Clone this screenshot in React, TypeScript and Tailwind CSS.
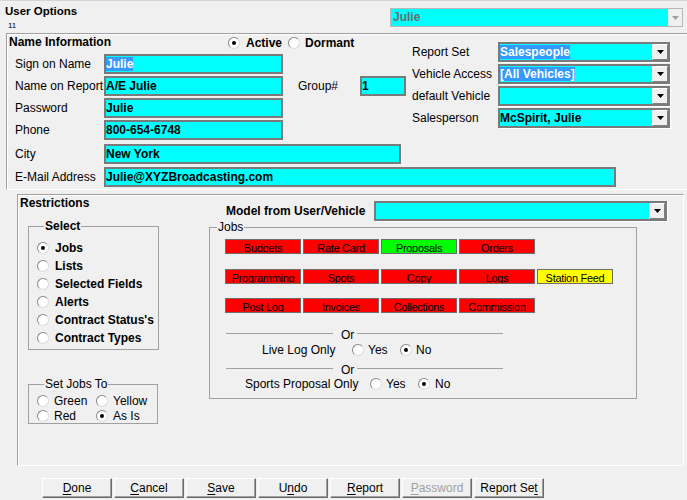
import React from "react";

function Radio({ on }: { on?: boolean }) {
  return (
    <span className="flex h-[12px] w-[12px] shrink-0 items-center justify-center rounded-full border border-t-[#8a8a8a] border-l-[#8a8a8a] border-r-[#dcdcdc] border-b-[#dcdcdc] bg-white">
      {on && <span className="h-[4px] w-[4px] rounded-full bg-black" />}
    </span>
  );
}

function Arrow({ gray }: { gray?: boolean }) {
  return (
    <svg width="7" height="4" viewBox="0 0 7 4">
      <polygon points="0,0 7,0 3.5,4" fill={gray ? "#a0a0a0" : "#000"} />
    </svg>
  );
}

function Combo({ w, text, sel }: { w: string; text?: string; sel?: boolean }) {
  return (
    <div className={`flex h-[20px] border-2 border-[#7a7a7a] bg-[#00ffff] shadow-[1px_1px_0_#fff] ${w}`}>
      <div className="flex-1 overflow-hidden whitespace-nowrap pt-[1px] text-[12px] font-bold leading-[14px]">
        {sel ? <span className="bg-[#3399ff] text-white">{text}</span> : text}
      </div>
      <div className="flex w-[16px] items-center justify-center border border-t-white border-l-white border-b-[#808080] border-r-[#808080] bg-[#f0f0f0]">
        <Arrow />
      </div>
    </div>
  );
}

function TextBox({ w, text, sel }: { w: string; text?: string; sel?: boolean }) {
  return (
    <div className={`h-[20px] overflow-hidden whitespace-nowrap border-2 border-[#7a7a7a] bg-[#00ffff] pt-[1px] text-[12px] font-bold leading-[14px] ${w}`}>
      {sel ? <span className="bg-[#3399ff] text-white">{text}</span> : text}
    </div>
  );
}

function JobBtn({ label, color }: { label: string; color: string }) {
  return (
    <div className={`h-[15px] w-[76px] overflow-hidden border border-[#6c6c6c] pt-[2px] text-center text-[11px] leading-[13px] tracking-[-0.3px] ${color}`}>
      {label}
    </div>
  );
}

function Btn({ pre, u, post, disabled }: { pre?: string; u: string; post?: string; disabled?: boolean }) {
  return (
    <div
      className={`flex h-[20px] w-[70px] items-center justify-center border border-t-white border-l-white border-b-[#696969] border-r-[#696969] bg-[#f0f0f0] shadow-[inset_-1px_-1px_0_#a0a0a0] text-[12px] ${
        disabled ? "text-[#a0a0a0]" : "text-black"
      }`}
    >
      {pre}
      <span className="underline underline-offset-2">{u}</span>
      {post}
    </div>
  );
}

function Or() {
  return (
    <div className="ml-[16px] flex h-[14px] items-center">
      <div className="h-px w-[107px] bg-[#a0a0a0]" />
      <span className="ml-[8px] pt-[3px] leading-[14px]">Or</span>
      <div className="ml-[3px] h-px w-[146px] bg-[#a0a0a0]" />
    </div>
  );
}

const leftRows = [
  { label: "Sign on Name", text: "Julie", sel: true },
  { label: "Name on Report", text: "A/E Julie", group: true },
  { label: "Password", text: "Julie" },
  { label: "Phone", text: "800-654-6748" },
];

const rightRows = [
  { label: "Report Set", text: "Salespeople", sel: true },
  { label: "Vehicle Access", text: "[All Vehicles]", sel: true },
  { label: "default Vehicle", text: "" },
  { label: "Salesperson", text: "McSpirit, Julie" },
];

const selectItems = ["Jobs", "Lists", "Selected Fields", "Alerts", "Contract Status's", "Contract Types"];

const jobRows = [
  [
    ["Budgets", "bg-[#ff0000]"],
    ["Rate Card", "bg-[#ff0000]"],
    ["Proposals", "bg-[#00ff00]"],
    ["Orders", "bg-[#ff0000]"],
  ],
  [
    ["Programming", "bg-[#ff0000]"],
    ["Spots", "bg-[#ff0000]"],
    ["Copy", "bg-[#ff0000]"],
    ["Logs", "bg-[#ff0000]"],
    ["Station Feed", "bg-[#ffff00]"],
  ],
  [
    ["Post Log", "bg-[#ff0000]"],
    ["Invoices", "bg-[#ff0000]"],
    ["Collections", "bg-[#ff0000]"],
    ["Commission", "bg-[#ff0000]"],
  ],
];

export default function App() {
  return (
    <div className="h-[500px] w-[687px] overflow-hidden border-t border-[#d4d4d4] bg-[#f0f0f0] font-['Liberation_Sans',Arial,sans-serif] text-[12px] text-black">
      {/* header */}
      <div className="flex h-[32px] justify-between">
        <div>
          <div className="pl-[5px] pt-[3px] text-[11.5px] font-bold leading-[14px]">User Options</div>
          <div className="pl-[8px] pt-[3px] text-[8px] leading-[9px]">11</div>
        </div>
        <div className="mr-[4px] mt-[7px] flex h-[19px] w-[293px] border border-[#b8b8b8] bg-[#00ffff]">
          <div className="flex-1 pl-[2px] text-[12px] font-bold leading-[16px] text-[#6d6d6d]">Julie</div>
          <div className="flex w-[14px] items-center justify-center bg-[#f0f0f0]">
            <Arrow gray />
          </div>
        </div>
      </div>

      {/* Name Information */}
      <div className="ml-[6px] h-[157px] w-[700px] border border-t-[#a0a0a0] border-l-[#a0a0a0] border-b-white border-r-white shadow-[inset_1px_1px_0_#fff]">
        <div className="flex">
          <div className="w-[405px]">
            <div className="flex h-[20px] items-start">
              <div className="w-[221px] pl-[2px] pt-[1px] font-bold leading-[14px]">Name Information</div>
              <div className="flex items-center pt-[2px] font-bold leading-[14px]">
                <Radio on />
                <span className="ml-[6px]">Active</span>
                <span className="ml-[6px]">
                  <Radio />
                </span>
                <span className="ml-[5px]">Dormant</span>
              </div>
            </div>
            {leftRows.map((r) => (
              <div key={r.label} className="mb-[2px] flex h-[20px] items-center pl-[8px]">
                <span className="w-[89px] whitespace-nowrap">{r.label}</span>
                <TextBox w="w-[179px]" text={r.text} sel={r.sel} />
                {r.group && (
                  <>
                    <span className="ml-[15px] w-[62px]">Group#</span>
                    <TextBox w="w-[46px]" text="1" />
                  </>
                )}
              </div>
            ))}
          </div>
          <div className="pt-[8px]">
            {rightRows.map((r) => (
              <div key={r.label} className="mb-[2px] flex h-[20px] items-center">
                <span className="w-[86px] whitespace-nowrap">{r.label}</span>
                <Combo w="w-[172px]" text={r.text} sel={r.sel} />
              </div>
            ))}
          </div>
        </div>
        <div className="mt-[2px] flex h-[20px] items-center pl-[8px]">
          <span className="w-[89px]">City</span>
          <TextBox w="w-[297px]" text="New York" />
        </div>
        <div className="mt-[3px] flex h-[20px] items-center pl-[8px]">
          <span className="w-[89px] whitespace-nowrap">E-Mail Address</span>
          <TextBox w="w-[512px]" text="Julie@XYZBroadcasting.com" />
        </div>
      </div>

      {/* Restrictions */}
      <div className="ml-[17px] mt-[4px] flex h-[272px] w-[667px] border border-t-[#a0a0a0] border-l-[#a0a0a0] border-b-white border-r-white shadow-[inset_1px_1px_0_#fff]">
        <div className="w-[191px]">
          <div className="pl-[2px] pt-[1px] font-bold leading-[14px]">Restrictions</div>
          <fieldset className="ml-[10px] mt-[10px] h-[130px] w-[131px] border border-[#a0a0a0] pl-[8px]">
            <legend className="ml-[7px] px-[1px] font-bold leading-[13px]">Select</legend>
            <div className="pt-[6px]">
              {selectItems.map((s, i) => (
                <div key={s} className="flex h-[18px] items-center font-bold">
                  <Radio on={i === 0} />
                  <span className="ml-[6px] whitespace-nowrap">{s}</span>
                </div>
              ))}
            </div>
          </fieldset>
          <fieldset className="ml-[10px] mt-[28px] h-[46px] w-[130px] border border-[#a0a0a0] pl-[8px]">
            <legend className="ml-[7px] px-[1px] leading-[13px]">Set Jobs To</legend>
            <div className="grid grid-cols-[59px_59px] pt-[2px]">
              {[
                ["Green", false],
                ["Yellow", false],
                ["Red", false],
                ["As Is", true],
              ].map(([l, on]) => (
                <div key={l as string} className="flex h-[15px] items-center">
                  <Radio on={on as boolean} />
                  <span className="ml-[5px]">{l}</span>
                </div>
              ))}
            </div>
          </fieldset>
        </div>

        <div>
          <div className="mt-[6px] flex h-[19px] items-center">
            <span className="ml-[17px] w-[148px] font-bold">Model from User/Vehicle</span>
            <Combo w="w-[293px] h-[19px]" />
          </div>
          <fieldset className="mt-[1px] h-[178px] w-[428px] border border-[#a0a0a0]">
            <legend className="ml-[7px] px-[1px] leading-[13px]">Jobs</legend>
            {jobRows.map((row, i) => (
              <div key={i} className={`ml-[15px] flex gap-[2px] ${i === 0 ? "mt-[5px]" : i === 1 ? "mt-[15px]" : "mt-[14px]"}`}>
                {row.map(([l, c]) => (
                  <JobBtn key={l} label={l} color={c} />
                ))}
              </div>
            ))}
            <div className="mt-[13px]">
              <Or />
            </div>
            <div className="mt-[2px] flex h-[16px] items-center">
              <span className="ml-[52px] w-[90px]">Live Log Only</span>
              <Radio />
              <span className="ml-[4px] w-[32px]">Yes</span>
              <Radio on />
              <span className="ml-[4px]">No</span>
            </div>
            <div className="mt-[3px]">
              <Or />
            </div>
            <div className="mt-[1px] flex h-[16px] items-center">
              <span className="ml-[35px] w-[125px] whitespace-nowrap">Sports Proposal Only</span>
              <Radio />
              <span className="ml-[4px] w-[32px]">Yes</span>
              <Radio on />
              <span className="ml-[5px]">No</span>
            </div>
          </fieldset>
        </div>
      </div>

      {/* buttons */}
      <div className="ml-[42px] mt-[12px] flex gap-[2px]">
        <Btn u="D" post="one" />
        <Btn u="C" post="ancel" />
        <Btn u="S" post="ave" />
        <Btn pre="U" u="n" post="do" />
        <Btn u="R" post="eport" />
        <Btn u="P" post="assword" disabled />
        <Btn pre="Report Se" u="t" />
      </div>
    </div>
  );
}
